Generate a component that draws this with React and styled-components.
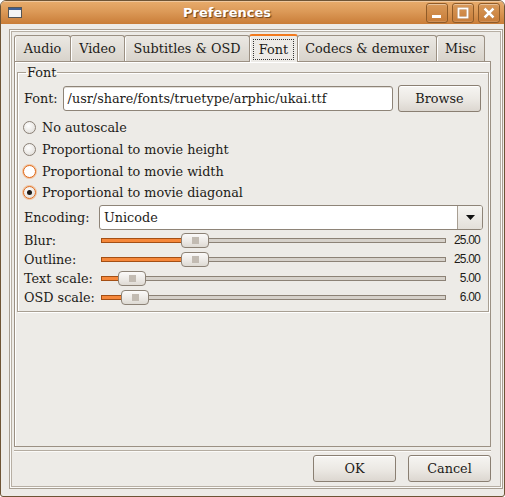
import React from "react";
import styled, { createGlobalStyle } from "styled-components";

const GlobalStyle = createGlobalStyle`
    body {
        margin: 0;
        background: #ffffff;
        font-family: "DejaVu Serif", "Liberation Serif", serif;
        font-size: 12.8px;
        color: #1d1b18;
    }
`;

const tabs = [
    { label: "Audio", width: 57 },
    { label: "Video", width: 55 },
    { label: "Subtitles & OSD", width: 126 },
    { label: "Font", width: 49, active: true },
    { label: "Codecs & demuxer", width: 140 },
    { label: "Misc", width: 49 },
];

const scaleOptions = [
    { label: "No autoscale" },
    { label: "Proportional to movie height" },
    { label: "Proportional to movie width", hover: true },
    { label: "Proportional to movie diagonal", checked: true },
];

const sliders = [
    { label: "Blur:", value: 25 },
    { label: "Outline:", value: 25 },
    { label: "Text scale:", value: 5 },
    { label: "OSD scale:", value: 6 },
];

const Slider = ({ value, max = 100 }) => {
    // handle travel = trough width - handle width
    const left = Math.round((value / max) * (345 - 28));
    return (
        <Trough>
            <Fill style={{ width: left + 4 }} />
            <Handle style={{ left }}>
                <Grip />
            </Handle>
        </Trough>
    );
};

const Radio = ({ checked, hover }) => (
    <RadioCircle checked={checked} hover={hover}>
        {checked && <RadioDot />}
    </RadioCircle>
);

const App = () => {
    return (
        <>
            <GlobalStyle />
            <Window>
                <TitleBar>
                    <WindowIcon>
                        <div />
                    </WindowIcon>
                    <Title>Preferences</Title>
                    <TitleButtons>
                        <TitleButton>
                            <svg width="12" height="12" viewBox="0 0 12 12">
                                <rect x="1" y="8" width="9" height="3" fill="#fff" />
                            </svg>
                        </TitleButton>
                        <TitleButton>
                            <svg width="12" height="12" viewBox="0 0 12 12">
                                <rect x="1.5" y="1.5" width="9" height="9" fill="none" stroke="#fff" strokeWidth="2" />
                            </svg>
                        </TitleButton>
                        <TitleButton>
                            <svg width="12" height="12" viewBox="0 0 12 12">
                                <path d="M1.5 1.5 L10.5 10.5 M10.5 1.5 L1.5 10.5" stroke="#fff" strokeWidth="2.6" />
                            </svg>
                        </TitleButton>
                    </TitleButtons>
                </TitleBar>

                <Body>
                    <DialogFrame>
                        <Notebook>
                            <TabRow>
                                {tabs.map((t) => (
                                    <Tab key={t.label} active={t.active} width={t.width}>
                                        {t.active ? <Focus>{t.label}</Focus> : t.label}
                                    </Tab>
                                ))}
                            </TabRow>
                            <Panel>
                                <Group>
                                    <legend>Font</legend>
                                    <Row>
                                        <Label>Font:</Label>
                                        <Entry>/usr/share/fonts/truetype/arphic/ukai.ttf</Entry>
                                        <Button width={83}>Browse</Button>
                                    </Row>

                                    <RadioList>
                                        {scaleOptions.map((o) => (
                                            <RadioRow key={o.label}>
                                                <Radio checked={o.checked} hover={o.hover} />
                                                {o.label}
                                            </RadioRow>
                                        ))}
                                    </RadioList>

                                    <Row>
                                        <Label width={75}>Encoding:</Label>
                                        <Combo>
                                            <span>Unicode</span>
                                            <ComboArrow>
                                                <svg width="9" height="5" viewBox="0 0 9 5">
                                                    <path d="M0 0 H9 L4.5 5 Z" fill="#111" />
                                                </svg>
                                            </ComboArrow>
                                        </Combo>
                                    </Row>

                                    <div>
                                        {sliders.map((s) => (
                                            <SliderRow key={s.label}>
                                                <SliderLabel>{s.label}</SliderLabel>
                                                <Slider value={s.value} />
                                                <Value>{s.value.toFixed(2)}</Value>
                                            </SliderRow>
                                        ))}
                                    </div>
                                </Group>
                            </Panel>
                        </Notebook>

                        <Separator />

                        <ButtonRow>
                            <Button width={83}>OK</Button>
                            <Button width={83}>Cancel</Button>
                        </ButtonRow>
                    </DialogFrame>
                </Body>
            </Window>
        </>
    );
};

export default App;

const Window = styled.div`
    width: 505px;
    height: 497px;
    box-sizing: border-box;
    border: 1px solid #6e5435;
    border-radius: 6px 6px 3px 3px;
    background: #edebe7;
    display: flex;
    flex-direction: column;
    overflow: hidden;
`;

const TitleBar = styled.div`
    height: 23px;
    flex-shrink: 0;
    display: flex;
    align-items: center;
    background: linear-gradient(#e8ac6c 0%, #dc9a58 45%, #c97d38 100%);
    box-shadow: inset 0 1px 0 rgba(255, 255, 255, 0.35);
`;

const WindowIcon = styled.div`
    width: 12px;
    height: 9px;
    margin-left: 7px;
    border: 1px solid #555;
    background: #f4f4f4;
    box-sizing: content-box;

    div {
        height: 2px;
        background: #3d5e94;
    }
`;

const Title = styled.div`
    flex: 1;
    text-align: center;
    font-family: "DejaVu Sans", sans-serif;
    font-weight: bold;
    font-size: 13px;
    color: #ffffff;
    text-shadow: 1px 1px 1px rgba(60, 30, 0, 0.7);
    padding-left: 6px;
`;

const TitleButtons = styled.div`
    display: flex;
    gap: 4px;
    margin-right: 4px;
`;

const TitleButton = styled.div`
    width: 22px;
    height: 20px;
    box-sizing: border-box;
    border: 1px solid #8f5b28;
    border-radius: 3px;
    background: linear-gradient(#d99a5a, #c77c38);
    box-shadow: inset 0 1px 0 rgba(255, 255, 255, 0.4), inset 0 -1px 0 rgba(255, 255, 255, 0.15);
    display: flex;
    align-items: center;
    justify-content: center;

    svg {
        filter: drop-shadow(0 0 0.6px rgba(80, 40, 0, 0.6));
    }
`;

const Body = styled.div`
    flex: 1;
    display: flex;
    padding: 5px 1px 7px 8px;
    min-height: 0;
`;

const DialogFrame = styled.div`
    flex: 1;
    min-width: 0;
    display: flex;
    flex-direction: column;
    border: 1px solid #a89f93;
    box-shadow: inset 0 0 0 1px #fbfaf8, inset 0 0 0 2px #b7afa4;
    padding: 3px 11px 6px 4px;
`;

const Notebook = styled.div`
    flex: 1;
    min-width: 0;
    display: flex;
    flex-direction: column;
`;

const TabRow = styled.div`
    display: flex;
    align-items: flex-end;
    height: 28px;
`;

const Tab = styled.div`
    position: relative;
    z-index: ${(p) => (p.active ? 2 : 1)};
    width: ${(p) => p.width}px;
    height: ${(p) => (p.active ? "28px" : "26px")};
    box-sizing: border-box;
    display: flex;
    align-items: center;
    justify-content: center;
    flex-shrink: 0;
    margin-left: -1px;
    margin-bottom: ${(p) => (p.active ? "-1px" : "0")};
    border: 1px solid #9b9083;
    border-top: ${(p) => (p.active ? "2px solid #f27a1e" : "1px solid #9b9083")};
    border-bottom: none;
    border-radius: 3px 3px 0 0;
    background: ${(p) => (p.active ? "#edebe7" : "linear-gradient(#ebe8e3, #d8d3cb)")};
    box-shadow: inset 1px 0 0 #fff;
    white-space: nowrap;

    &:first-child {
        margin-left: 0;
    }
`;

const Focus = styled.span`
    border: 1px dotted #333;
    padding: 2px 5px;
`;

const Panel = styled.div`
    flex: 1;
    border: 1px solid #9b9083;
    box-shadow: inset 1px 1px 0 #fff;
    padding: 0 1px 0 2px;
`;

const Group = styled.fieldset`
    margin: 3px 0 0 0;
    padding: 5px 7px 4px 6px;
    border: 1px solid #a89f93;
    box-shadow: inset 1px 1px 0 #fff, 1px 1px 0 #fff;
    min-width: 0;

    legend {
        padding: 0 1px;
        margin-left: 2px;
        line-height: 15px;
    }
`;

const Row = styled.div`
    display: flex;
    align-items: center;
    height: 27px;
`;

const Label = styled.div`
    width: ${(p) => (p.width ? p.width + "px" : "auto")};
    margin-right: ${(p) => (p.width ? 0 : 5)}px;
    flex-shrink: 0;
`;

const Entry = styled.div`
    flex: 1;
    height: 25px;
    box-sizing: border-box;
    border: 1px solid #8e8478;
    border-radius: 3px;
    background: #fff;
    box-shadow: inset 0 1px 0 #e2ded8;
    padding: 0 4px;
    display: flex;
    align-items: center;
    margin-right: 5px;
    white-space: nowrap;
    overflow: hidden;
`;

const Button = styled.div`
    width: ${(p) => p.width}px;
    height: 27px;
    box-sizing: border-box;
    border: 1px solid #8a7f72;
    border-radius: 3px;
    background: linear-gradient(#f6f5f2 0%, #ebe8e3 55%, #dcd7d0 100%);
    box-shadow: inset 0 1px 0 #fff;
    display: flex;
    align-items: center;
    justify-content: center;
    flex-shrink: 0;
`;

const RadioList = styled.div`
    margin-top: 5px;
    margin-left: -1px;
`;

const RadioRow = styled.div`
    height: 21.7px;
    display: flex;
    align-items: center;
    gap: 6px;
    white-space: nowrap;
`;

const RadioCircle = styled.div`
    width: 13px;
    height: 13px;
    box-sizing: border-box;
    border-radius: 50%;
    border: 1px solid ${(p) => (p.checked || p.hover ? "#e06a1a" : "#8a8076")};
    background: ${(p) =>
        p.hover ? "#ffffff" : "radial-gradient(circle at 40% 35%, #ffffff, #dcd8d2)"};
    box-shadow: ${(p) => (p.checked || p.hover ? "0 0 0 1px rgba(245,150,80,0.45)" : "none")};
    display: flex;
    align-items: center;
    justify-content: center;
    flex-shrink: 0;
`;

const RadioDot = styled.div`
    width: 5px;
    height: 5px;
    border-radius: 50%;
    background: #1e1a16;
`;

const Combo = styled.div`
    flex: 1;
    height: 25px;
    box-sizing: border-box;
    border: 1px solid #8e8478;
    border-radius: 3px;
    background: #fff;
    display: flex;
    align-items: center;
    margin-right: -2px;

    span {
        flex: 1;
        padding-left: 4px;
    }
`;

const ComboArrow = styled.div`
    width: 24px;
    align-self: stretch;
    border-left: 1px solid #a89f93;
    border-radius: 0 2px 2px 0;
    background: linear-gradient(#f6f5f2, #e3dfd9);
    display: flex;
    align-items: center;
    justify-content: center;
`;

const SliderRow = styled.div`
    height: 19px;
    display: flex;
    align-items: center;
`;

const SliderLabel = styled.div`
    width: 77px;
    flex-shrink: 0;
    white-space: nowrap;
`;

const Trough = styled.div`
    position: relative;
    width: 345px;
    height: 5px;
    box-sizing: border-box;
    border: 1px solid #8c8276;
    background: #d6d1ca;
    flex-shrink: 0;
`;

const Fill = styled.div`
    height: 100%;
    margin: -1px 0 0 -1px;
    border: 1px solid #a44f14;
    background: #f5873a;
`;

const Handle = styled.div`
    position: absolute;
    top: -6px;
    width: 28px;
    height: 15px;
    box-sizing: border-box;
    border: 1px solid #8c8276;
    border-radius: 4px;
    background: linear-gradient(#fbfaf9, #ebe8e4 60%, #dedad3);
    display: flex;
    align-items: center;
    justify-content: center;
`;

const Grip = styled.div`
    width: 7px;
    height: 7px;
    background-image: radial-gradient(circle, #c2bbb2 0.8px, transparent 1px);
    background-size: 2px 2px;
`;

const Value = styled.div`
    flex: 1;
    text-align: right;
    font-family: "Liberation Sans", sans-serif;
    font-size: 12px;
    letter-spacing: -0.8px;
    padding-right: 1px;
`;

const Separator = styled.div`
    height: 0;
    border-top: 1px solid #b4aca1;
    border-bottom: 1px solid #fbfaf8;
    margin: 3px 0 3px;
`;

const ButtonRow = styled.div`
    display: flex;
    justify-content: flex-end;
    gap: 12px;
`;
